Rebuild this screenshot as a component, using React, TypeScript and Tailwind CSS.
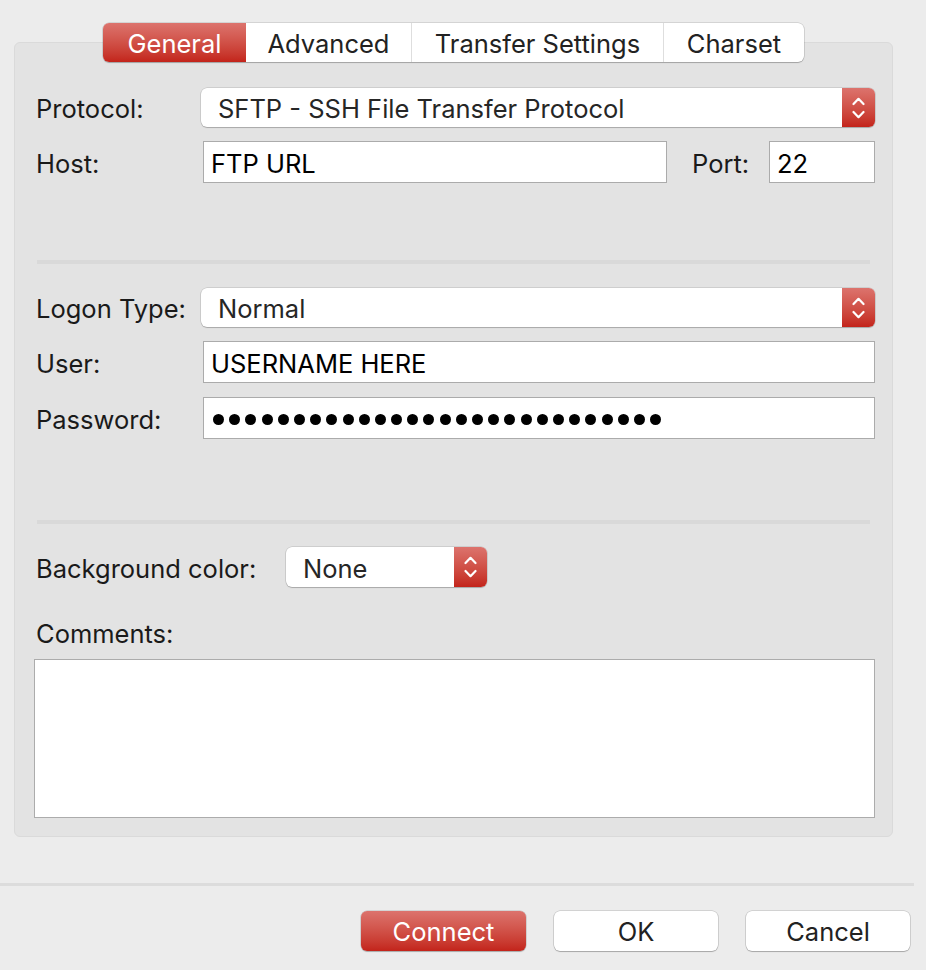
import React from 'react'

const font = { fontFamily: 'Inter, "Noto Sans", "Liberation Sans", sans-serif' }

function Stepper() {
  return (
    <div className="flex h-full w-[33px] items-center justify-center rounded-r-[6px] bg-gradient-to-b from-[#dc736d] to-[#c3231a]">
      <svg width="13" height="22" viewBox="0 0 13 22" fill="none">
        <path d="M1.5 7 L6.5 1.8 L11.5 7" stroke="white" strokeWidth="2.2" strokeLinecap="round" strokeLinejoin="round" />
        <path d="M1.5 15 L6.5 20.2 L11.5 15" stroke="white" strokeWidth="2.2" strokeLinecap="round" strokeLinejoin="round" />
      </svg>
    </div>
  )
}

function Select({ value, className }: { value: string; className: string }) {
  return (
    <div className={`flex items-center rounded-[6px] bg-white shadow-[0_0_0_0.5px_rgba(0,0,0,0.18),0_1px_1px_rgba(0,0,0,0.18)] ${className}`}>
      <span className="flex-1 pl-[17px] pt-[3px] text-[25.5px] text-[#262626]">{value}</span>
      <Stepper />
    </div>
  )
}

function TextBox({ children, className }: { children?: React.ReactNode; className: string }) {
  return (
    <div className={`flex items-center border border-[#ababab] bg-white pl-[7px] pt-[3px] text-[25.5px] text-black ${className}`}>
      {children}
    </div>
  )
}

function Label({ text, className = 'w-[167px]' }: { text: string; className?: string }) {
  return <span className={`shrink-0 pl-[2px] pt-[3px] text-[25.5px] text-[#1a1a1a] ${className}`}>{text}</span>
}

function Separator({ className }: { className: string }) {
  return <div className={`ml-[3px] mr-[5px] h-[4px] bg-[#d9d9d9] ${className}`} />
}

const tabs = [
  { name: 'General', w: 'w-[143px]' },
  { name: 'Advanced', w: 'w-[165px]' },
  { name: 'Transfer Settings', w: 'w-[252px]' },
  { name: 'Charset', w: 'w-[141px]' },
]

export default function App() {
  return (
    <div style={font} className="flex h-[970px] w-[926px] flex-col bg-[#ececec] leading-none">
      <div className="px-[14px] pr-[33px] pt-[23px]">
        {/* tab strip */}
        <div className="relative z-10 flex justify-center">
          <div className="flex h-[39px] rounded-[6px] bg-white shadow-[0_0_0_0.5px_rgba(0,0,0,0.2),0_1px_1px_rgba(0,0,0,0.2)]">
            {tabs.map((t, i) => (
              <div
                key={t.name}
                className={`flex items-center justify-center pt-[2px] text-[25.5px] ${t.w} ${
                  i === 0
                    ? 'rounded-l-[6px] bg-gradient-to-b from-[#dc736d] to-[#c3231a] text-white'
                    : 'text-[#222]'
                } ${i > 1 ? 'border-l border-[#dedede]' : ''}`}
              >
                {t.name}
              </div>
            ))}
          </div>
        </div>

        {/* panel */}
        <div className="-mt-[20px] flex flex-col rounded-[6px] border border-[#dadada] bg-[#e3e3e3] pb-[18px] pl-[19px] pr-[17px] pt-[45px]">
          <div className="flex h-[39px] items-center">
            <Label text="Protocol:" />
            <Select value="SFTP - SSH File Transfer Protocol" className="h-[39px] flex-1" />
          </div>
          <div className="mt-[14px] flex h-[42px] items-center">
            <Label text="Host:" />
            <TextBox className="ml-[2px] h-[42px] w-[464px]">FTP URL</TextBox>
            <span className="ml-[25px] w-[77px] pt-[3px] text-[25.5px] text-[#1a1a1a]">Port:</span>
            <TextBox className="h-[42px] flex-1">22</TextBox>
          </div>

          <Separator className="mt-[77px]" />

          <div className="mt-[24px] flex h-[39px] items-center">
            <Label text="Logon Type:" />
            <Select value="Normal" className="h-[39px] flex-1" />
          </div>
          <div className="mt-[14px] flex h-[42px] items-center">
            <Label text="User:" />
            <TextBox className="ml-[2px] h-[42px] flex-1">USERNAME HERE</TextBox>
          </div>
          <div className="mt-[14px] flex h-[42px] items-center">
            <Label text="Password:" />
            <TextBox className="ml-[2px] h-[42px] flex-1 gap-[5.2px] pl-[9px] pt-0">
              {Array.from({ length: 28 }).map((_, i) => (
                <span key={i} className="h-[11px] w-[11px] shrink-0 rounded-full bg-black" />
              ))}
            </TextBox>
          </div>

          <Separator className="mt-[81px]" />

          <div className="mt-[23px] flex h-[40px] items-center">
            <Label text="Background color:" className="w-[252px]" />
            <Select value="None" className="h-[40px] w-[201px]" />
          </div>

          <div className="mt-[33px] flex h-[24px] items-center">
            <Label text="Comments:" />
          </div>

          <div className="mt-[15px] h-[159px] border border-[#acacac] bg-white" />
        </div>
      </div>

      {/* bottom bar */}
      <div className="mt-[46px] h-[3px] w-[914px] bg-[#dcdcdc]" />
      <div className="flex justify-end gap-[28px] pr-[16px] pt-[25px]">
        <button className="flex h-[40px] w-[165px] items-center justify-center rounded-[6px] bg-gradient-to-b from-[#dc736d] to-[#c3231a] pt-[2px] text-[25.5px] text-white shadow-[0_0_0_0.5px_rgba(0,0,0,0.2),0_1px_1px_rgba(0,0,0,0.2)]">
          Connect
        </button>
        <button className="flex h-[40px] w-[164px] items-center justify-center rounded-[6px] bg-white pt-[2px] text-[25.5px] text-[#222] shadow-[0_0_0_0.5px_rgba(0,0,0,0.22),0_1px_1px_rgba(0,0,0,0.2)]">
          OK
        </button>
        <button className="flex h-[40px] w-[164px] items-center justify-center rounded-[6px] bg-white pt-[2px] text-[25.5px] text-[#222] shadow-[0_0_0_0.5px_rgba(0,0,0,0.22),0_1px_1px_rgba(0,0,0,0.2)]">
          Cancel
        </button>
      </div>
    </div>
  )
}
